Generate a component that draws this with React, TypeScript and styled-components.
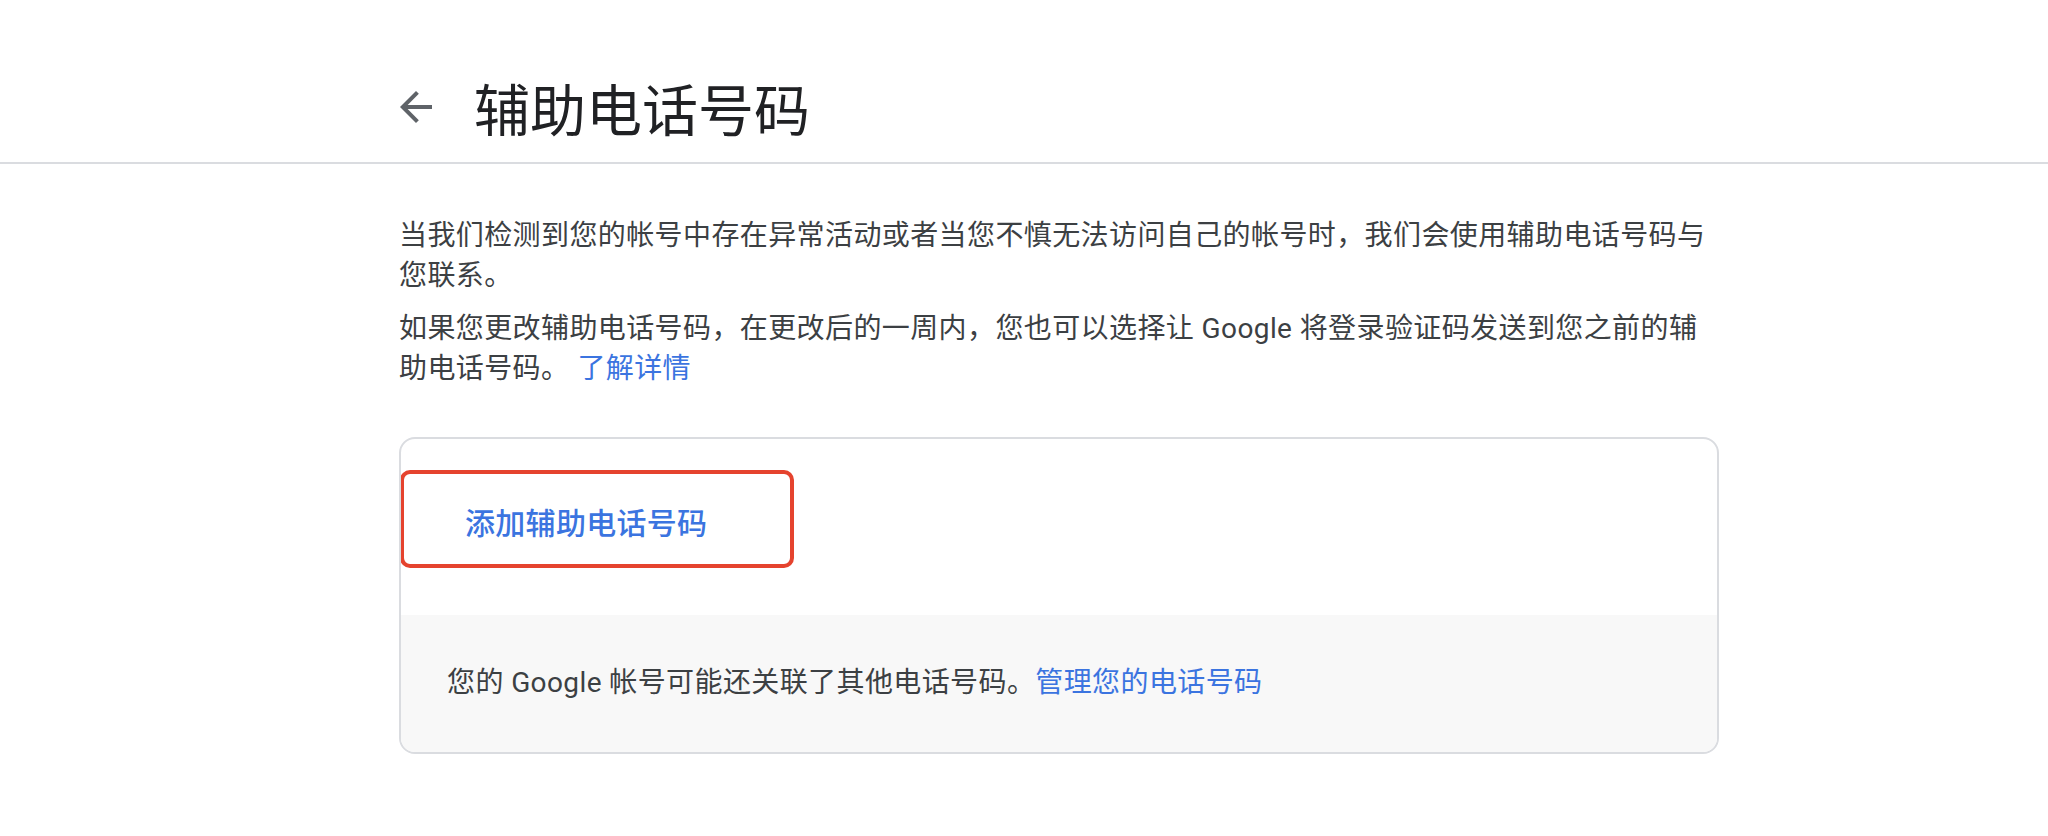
import React from 'react';
import styled, { createGlobalStyle } from 'styled-components';

const GlobalStyle = createGlobalStyle`
  body {
    margin: 0;
    background: #ffffff;
    font-family: Roboto, "Noto Sans CJK SC", sans-serif;
  }
`;

const Page = styled.div`
  width: 2048px;
  min-height: 836px;
  background: #fff;
`;

const Header = styled.header`
  display: flex;
  align-items: center;
  height: 72px;
  padding: 71px 0 19px 392px;
  border-bottom: 2px solid #dadce0;
`;

const BackButton = styled.button`
  display: flex;
  align-items: center;
  justify-content: center;
  width: 48px;
  height: 48px;
  padding: 0;
  border: none;
  background: transparent;
  color: #5f6368;
  cursor: pointer;
`;

const Title = styled.h1`
  margin: 0 0 0 34px;
  font-family: "Noto Sans CJK SC", sans-serif;
  font-size: 56px;
  font-weight: 400;
  line-height: 72px;
  color: #202124;
`;

const Main = styled.main`
  width: 1320px;
  padding: 52px 0 0 399px;
`;

const Para = styled.p<{ $gap?: number }>`
  margin: ${(p) => p.$gap ?? 0}px 0 0;
  font-size: 28px;
  line-height: 40px;
  letter-spacing: 0.4px;
  color: #3c4043;
`;

const Link = styled.a`
  color: #3b74e0;
  text-decoration: none;
  margin-left: 8px;
`;

const Card = styled.section`
  margin-top: 48px;
  border: 2px solid #dadce0;
  border-radius: 16px;
  overflow: hidden;
`;

const CardBody = styled.div`
  position: relative;
  padding: 46px 46px 58px;
`;

const TextButton = styled.button`
  height: 72px;
  padding: 0 18px;
  border: none;
  background: transparent;
  font-family: Roboto, "Noto Sans CJK SC", sans-serif;
  font-size: 30px;
  font-weight: 500;
  letter-spacing: 0.3px;
  color: #3b74e0;
  cursor: pointer;
`;

const Highlight = styled.div`
  position: absolute;
  left: -1px;
  top: 31px;
  width: 386px;
  height: 90px;
  border: 4px solid #e5432e;
  border-radius: 10px;
  pointer-events: none;
`;

const CardFooter = styled.div`
  padding: 48px 46px 49px;
  background: #f8f8f8;
  font-size: 28px;
  line-height: 40px;
  letter-spacing: 0.4px;
  color: #3c4043;
`;

const FooterLink = styled.a`
  color: #3b74e0;
  text-decoration: none;
`;

export default function App() {
  return (
    <Page>
      <GlobalStyle />
      <Header>
        <BackButton aria-label="返回">
          <svg width="48" height="48" viewBox="0 0 24 24" fill="currentColor">
            <path d="M20 11H7.83l5.59-5.59L12 4l-8 8 8 8 1.41-1.41L7.83 13H20v-2z" />
          </svg>
        </BackButton>
        <Title>辅助电话号码</Title>
      </Header>
      <Main>
        <Para>
          当我们检测到您的帐号中存在异常活动或者当您不慎无法访问自己的帐号时，我们会使用辅助电话号码与您联系。
        </Para>
        <Para $gap={13}>
          如果您更改辅助电话号码，在更改后的一周内，您也可以选择让 Google 将登录验证码发送到您之前的辅助电话号码。
          <Link href="#">了解详情</Link>
        </Para>
        <Card>
          <CardBody>
            <TextButton>添加辅助电话号码</TextButton>
            <Highlight />
          </CardBody>
          <CardFooter>
            您的 Google 帐号可能还关联了其他电话号码。<FooterLink href="#">管理您的电话号码</FooterLink>
          </CardFooter>
        </Card>
      </Main>
    </Page>
  );
}
